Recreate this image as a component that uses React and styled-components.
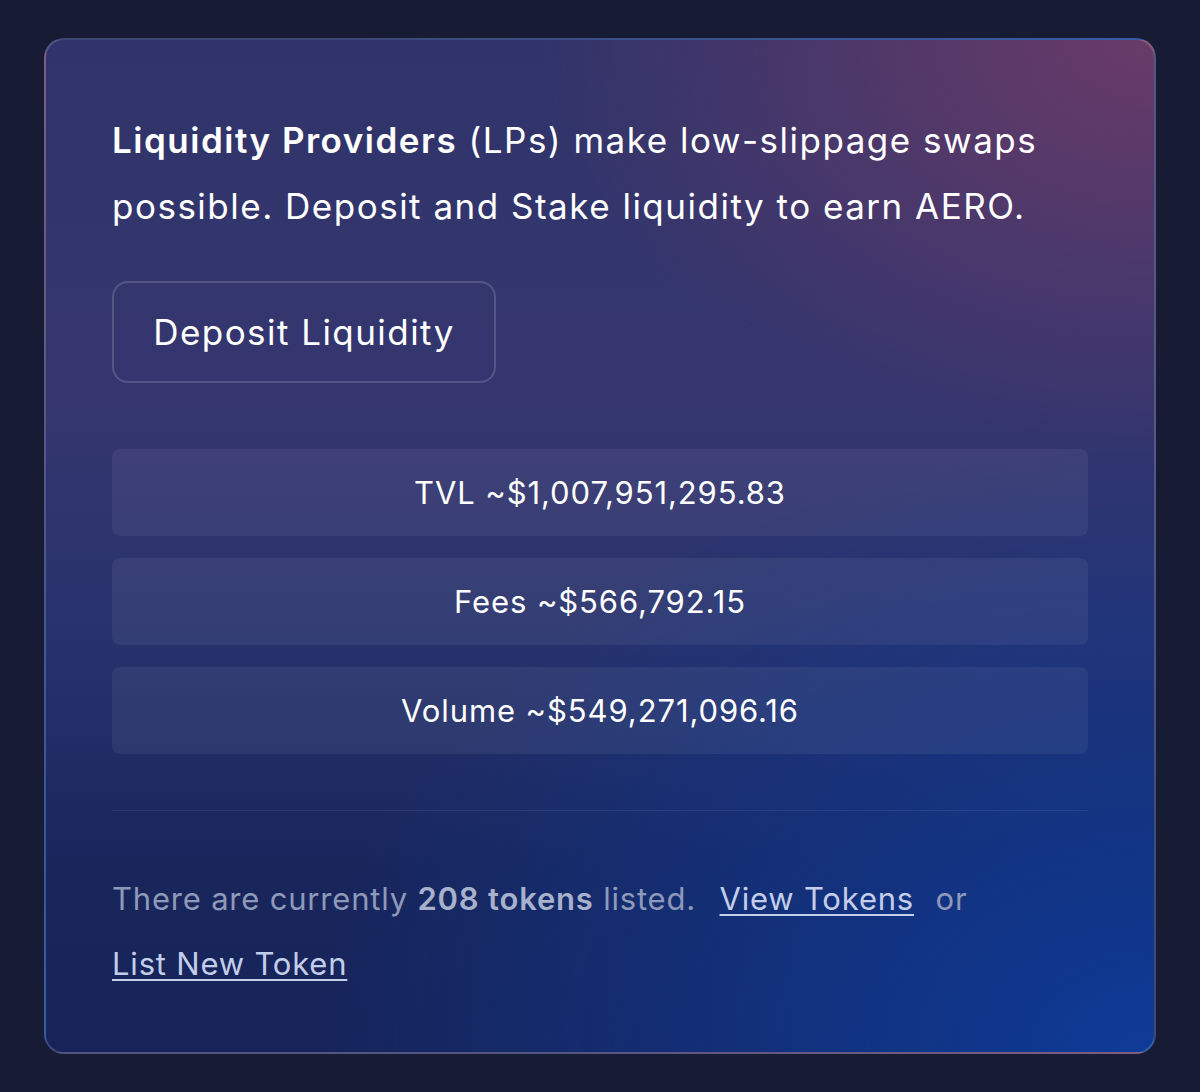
import React from "react";
import styled, { createGlobalStyle } from "styled-components";

const GlobalStyle = createGlobalStyle`
  body {
    margin: 0;
    background: #171b33;
    font-family: Inter, "Noto Sans", sans-serif;
    -webkit-font-smoothing: antialiased;
  }
`;

const Page = styled.div`
  padding: 38px 44px;
  min-height: 1092px;
  box-sizing: border-box;
`;

const Card = styled.section`
  box-sizing: border-box;
  height: 1016px;
  padding: 67px 66px 56px;
  border: 2px solid rgba(255, 255, 255, 0.17);
  border-radius: 20px;
  background:
    radial-gradient(ellipse 55% 40% at 100% 0%, rgba(112, 60, 104, 0.9) 0%, rgba(112, 60, 104, 0) 100%),
    radial-gradient(ellipse 75% 60% at 100% 100%, rgba(14, 60, 155, 0.95) 0%, rgba(14, 60, 155, 0) 100%),
    linear-gradient(180deg, #30346a 0%, #35366f 35%, #27326c 60%, #18265c 82%, #16245a 100%);
`;

const Intro = styled.p`
  margin: 0;
  font-size: 35px;
  line-height: 66px;
  color: #ffffff;
  letter-spacing: 1.5px;

  strong {
    font-weight: 600;
  }
`;

const DepositButton = styled.button`
  margin-top: 42px;
  width: 384px;
  height: 102px;
  border: 2px solid rgba(255, 255, 255, 0.16);
  border-radius: 16px;
  background: transparent;
  color: #ffffff;
  font-family: inherit;
  font-size: 35px;
  letter-spacing: 1.45px;
  cursor: pointer;
`;

const Stats = styled.div`
  margin-top: 66px;
  display: flex;
  flex-direction: column;
  gap: 22px;
`;

const Stat = styled.div`
  height: 87px;
  border-radius: 8px;
  background: rgba(255, 255, 255, 0.06);
  display: flex;
  align-items: center;
  justify-content: center;
  color: #ffffff;
  font-size: 31px;
  letter-spacing: 0.9px;
`;

const Divider = styled.hr`
  margin: 56px 0 0;
  border: none;
  height: 1px;
  background: rgba(255, 255, 255, 0.08);
`;

const Footer = styled.p`
  margin: 55px 0 0;
  font-size: 31px;
  line-height: 65px;
  letter-spacing: 0.8px;
  color: #8f99b9;

  strong {
    font-weight: 600;
    color: #a7b1cc;
  }
`;

const TokenLink = styled.a`
  color: #c3ceeb;
  white-space: nowrap;
  text-decoration: underline;
  text-underline-offset: 4px;
  text-decoration-thickness: 2px;
  margin-left: ${({ gap }) => (gap ? "14px" : "0")};
  cursor: pointer;
`;

const Or = styled.span`
  margin-left: 12px;
`;

const stats = [
  "TVL ~$1,007,951,295.83",
  "Fees ~$566,792.15",
  "Volume ~$549,271,096.16",
];

export default function App() {
  return (
    <Page>
      <GlobalStyle />
      <Card>
        <Intro>
          <strong>Liquidity Providers</strong> (LPs) make low-slippage swaps
          possible. Deposit and Stake liquidity to earn AERO.
        </Intro>
        <DepositButton>Deposit Liquidity</DepositButton>
        <Stats>
          {stats.map((s) => (
            <Stat key={s}>{s}</Stat>
          ))}
        </Stats>
        <Divider />
        <Footer>
          There are currently <strong>208 tokens</strong> listed.{" "}
          <TokenLink gap>View Tokens</TokenLink> <Or>or</Or>{" "}
          <TokenLink>List New Token</TokenLink>
        </Footer>
      </Card>
    </Page>
  );
}
